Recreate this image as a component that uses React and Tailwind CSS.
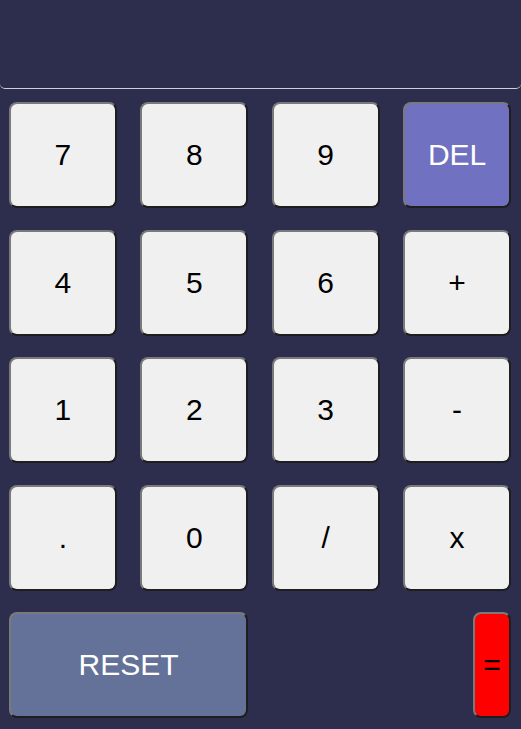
import React, { useState } from "react";

const keys = [
  { label: "7" },
  { label: "8" },
  { label: "9" },
  { label: "DEL", kind: "del" },
  { label: "4" },
  { label: "5" },
  { label: "6" },
  { label: "+" },
  { label: "1" },
  { label: "2" },
  { label: "3" },
  { label: "-" },
  { label: "." },
  { label: "0" },
  { label: "/" },
  { label: "x" },
];

const base =
  "h-[106px] rounded-lg border-2 border-t-[#7a7a7a] border-l-[#7a7a7a] border-b-[#1e1e1e] border-r-[#1e1e1e] text-[30px] leading-none flex items-center justify-center";

const kindClass = {
  del: "bg-[#7171c2] text-white",
  reset: "bg-[#647198] text-white",
  equals: "bg-[#ff0000] text-black",
  normal: "bg-[#f0f0f0] text-black",
};

export default function App() {
  const [value, setValue] = useState("");

  const press = (label) => {
    if (label === "DEL") setValue((v) => v.slice(0, -1));
    else if (label === "RESET") setValue("");
    else if (label === "=") {
      try {
        // eslint-disable-next-line no-new-func
        setValue(String(Function(`return (${value.replace(/x/g, "*")})`)()));
      } catch {
        setValue("");
      }
    } else setValue((v) => v + label);
  };

  return (
    <div
      className="min-h-screen w-[521px] bg-[#2d2d4e]"
      style={{ fontFamily: '"Liberation Sans", Arial, sans-serif' }}
    >
      {/* display */}
      <div className="h-[89px] rounded-[5px] border-b border-[#d0d0d0] flex items-center justify-end px-4 text-white text-[40px]">
        {value}
      </div>

      {/* keypad */}
      <div className="grid grid-cols-4 gap-x-[23.5px] gap-y-[21.5px] pl-[9px] pr-[10px] pt-[13px] pb-[11px]">
        {keys.map(({ label, kind }) => (
          <button
            key={label}
            onClick={() => press(label)}
            className={`${base} ${kindClass[kind || "normal"]}`}
          >
            {label}
          </button>
        ))}
        <button
          onClick={() => press("RESET")}
          className={`${base} ${kindClass.reset} col-span-2`}
        >
          RESET
        </button>
        <button
          onClick={() => press("=")}
          className={`${base} ${kindClass.equals} col-span-2 justify-self-end w-[38px]`}
        >
          =
        </button>
      </div>
    </div>
  );
}
